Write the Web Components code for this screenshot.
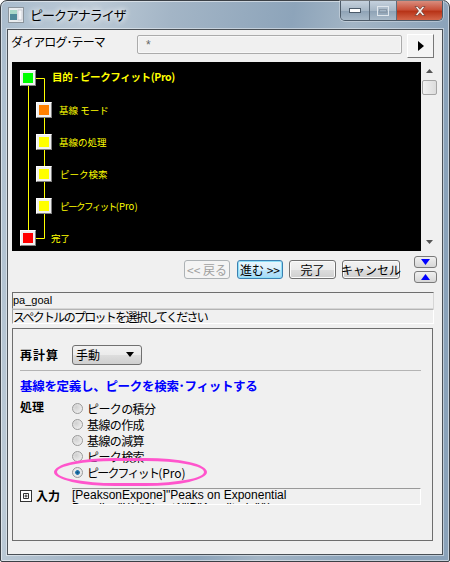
<!DOCTYPE html>
<html lang="ja">
<head>
<meta charset="utf-8">
<title>ピークアナライザ</title>
<style>
html,body{margin:0;padding:0;background:#fff}
body{font:12px "Noto Sans CJK JP","Liberation Sans",sans-serif;color:#000;font-feature-settings:"palt"}
</style>
</head>
<body>
<win-frame caption="ピークアナライザ">
  <theme-row></theme-row>
  <step-view></step-view>
  <wizard-bar></wizard-bar>
  <info-lines></info-lines>
  <goal-panel></goal-panel>
</win-frame>
<script>
class winFrame extends HTMLElement{
    constructor(){
        super()
        this.attachShadow({mode:"open"})
    }
    connectedCallback(){
        this.shadowRoot.innerHTML = `
        <style>
        :host{display:block;width:450px;height:562px;box-sizing:border-box;font:12px "Noto Sans CJK JP","Liberation Sans",sans-serif}
        .frame{box-sizing:border-box;height:562px;display:flex;flex-direction:column;padding:0 6px 6px 6px;border:1px solid #3b4046;border-radius:7px 7px 2px 2px;
            background:linear-gradient(100deg,#a9bccd 0,#bccad6 90px,#a3b5c6 170px,#8da4ba 290px,#a3b5c5 350px,#8aa2b9 450px);box-shadow:inset 0 0 0 1px #ffffff80}
        .title{height:28px;flex:none;display:flex;align-items:center;gap:6px;padding-left:1px;position:relative}
        .title span{font-size:13px;color:#000;text-shadow:0 0 6px #fff,0 0 6px #fff;margin-top:-1px;letter-spacing:-1px}
        .client{flex:1;min-height:0;background:#f0f0f0;border:1px solid #4a5056;box-shadow:0 0 0 1px #ffffff70;display:flex;flex-direction:column;padding:4px 5px 0 4px}
        .btns{position:absolute;right:0;top:0;height:20px;width:103px;display:flex;border:1px solid #4c5a68;border-top:none;border-radius:0 0 5px 5px;overflow:hidden;box-sizing:border-box;box-shadow:0 0 0 1px #ffffff50}
        .b{display:flex;align-items:center;justify-content:center;background:linear-gradient(#c5d1dd,#a7b7c6 50%,#8fa3b6 55%,#a9bac9);border-right:1px solid #5d6c7b;width:28px}
        .b.max{width:26px}
        .b.x{flex:1;border:none;background:linear-gradient(#d98d7e,#c9513a 45%,#b83418 55%,#d4664a)}
        </style>
        <div class="frame">
          <div class="title">
            <svg width="16" height="16" viewBox="0 0 16 16"><rect x=".5" y=".5" width="15" height="15" fill="#e8ecef" stroke="#8b949c"/><rect x="2" y="3" width="7" height="10" fill="#4f8a9a"/><rect x="2" y="3" width="7" height="4" fill="#a8d8c8"/><rect x="10" y="3" width="4" height="10" fill="#f4f6f8" stroke="#aab" stroke-width=".5"/></svg>
            <span>${this.getAttribute("caption")}</span>
            <div class="btns">
              <div class="b"><svg width="12" height="6"><rect x=".5" y=".5" width="11" height="4" fill="#fff" stroke="#4b5a69"/></svg></div>
              <div class="b max"><svg width="12" height="10"><rect x=".5" y=".5" width="11" height="9" fill="none" stroke="#dfe6ec"/><rect x="2.5" y="3.5" width="7" height="3" fill="none" stroke="#8a99a8"/></svg></div>
              <div class="b x"><svg width="14" height="12" viewBox="0 0 14 12"><path d="M2 1.5h2.6L7 4.3 9.400 1.500H12L8.500 6 12 10.500H9.400L7 7.700 4.600 10.500H2L5.500 6z" fill="#f4f1ee" stroke="#6b3a30" stroke-width=".7"/></svg></div>
            </div>
          </div>
          <div class="client"><slot></slot></div>
        </div>
        `
    }
}
customElements.define("win-frame", winFrame)

class themeRow extends HTMLElement{
    constructor(){
        super()
        this.attachShadow({mode:"open"})
    }
    connectedCallback(){
        this.shadowRoot.innerHTML = `
        <style>
        :host{display:flex;height:28px;box-sizing:border-box;align-items:flex-start}
        .lbl{width:126px;margin-left:-1px;font-size:12px;line-height:16px;letter-spacing:-.9px}
        .in{box-sizing:border-box;width:265px;height:19px;margin-top:1px;border:1px solid #ababab;border-radius:2px;box-shadow:inset 0 0 0 1px #f7f7f7;padding:2px 8px;font:12px/15px "Liberation Sans",sans-serif;color:#666}
        .go{box-sizing:border-box;width:27px;height:24px;margin-left:5px;background:#f4f4f4;border:1px solid #fff;border-right-color:#777;border-bottom-color:#777;display:flex;align-items:center;justify-content:center}
        </style>
        <div class="lbl">ダイアログ･テーマ</div>
        <div class="in">*</div>
        <div class="go"><svg width="8" height="12"><path d="M1 1l6 5-6 5z" fill="#000"/></svg></div>
        `
    }
}
customElements.define("theme-row", themeRow)

class stepView extends HTMLElement{
    constructor(){
        super()
        this.attachShadow({mode:"open"})
    }
    node(x,y,color){
        return `<i style="left:${x}px;top:${y}px;background:${color}"></i>`
    }
    label(x,y,text,extra){
        return `<span style="left:${x}px;top:${y}px;${extra || ""}">${text}</span>`
    }
    connectedCallback(){
        this.shadowRoot.innerHTML = `
        <style>
        :host{display:flex;height:189px}
        .tree{position:relative;width:410px;height:189px;background:#000;overflow:hidden}
        .tree svg{position:absolute;left:0;top:0}
        i{position:absolute;box-sizing:border-box;width:16px;height:16px;border:1px solid;border-color:#fff #808080 #808080 #fff;box-shadow:inset 0 0 0 2px #f0f0f0}
        span{position:absolute;color:#ff0;font-size:9.500px;line-height:12px;white-space:nowrap}
        u{text-decoration:none;letter-spacing:0}
        .bar{width:16px;height:189px;background:#f0f0f0;display:flex;flex-direction:column;align-items:center}
        .thumb{box-sizing:border-box;width:15px;height:15px;border:1px solid #a5a5a5;border-radius:2px;background:linear-gradient(90deg,#f2f2f2,#dcdcdc);margin-top:7px;flex:none}
        .up{margin-top:7px;flex:none}
        .dn{margin-top:auto;margin-bottom:7px;flex:none}
        </style>
        <div class="tree">
          <svg width="200" height="189" fill="none" stroke="#ff0" stroke-width="1"><path d="M16.500 20V172M24 16.500H32.500V176.500H24"/></svg>
          ${this.node(8,8,"#00ff00")}
          ${this.node(24,40,"#ff8000")}
          ${this.node(24,72,"#ffff00")}
          ${this.node(24,104,"#ffff00")}
          ${this.node(24,136,"#ffff00")}
          ${this.node(8,168,"#ff0000")}
          ${this.label(40,9,"目的 - ピークフィット(Pro)","font-weight:700;font-size:10.500px;letter-spacing:-.35px")}
          ${this.label(47,42,"基線 モード")}
          ${this.label(47,74,"基線の処理")}
          ${this.label(48,106,"ピーク検索")}
          ${this.label(48,138,"ピークフィット<u>(Pro)</u>","letter-spacing:-1.5px")}
          ${this.label(39,170,"完了")}
        </div>
        <div class="bar">
          <svg class="up" width="7" height="4"><path d="M3.500 0L7 4H0z" fill="#555"/></svg>
          <div class="thumb"></div>
          <svg class="dn" width="7" height="4"><path d="M0 0H7L3.500 4z" fill="#555"/></svg>
        </div>
        `
    }
}
customElements.define("step-view", stepView)

class wizButton extends HTMLElement{
    constructor(){
        super()
        this.attachShadow({mode:"open"})
    }
    connectedCallback(){
        this.shadowRoot.innerHTML = `
        <style>
        :host{display:flex;box-sizing:border-box;height:19px;align-items:center;justify-content:center;white-space:nowrap;font-size:12px;line-height:15px;border:1px solid #707070;border-radius:3px;background:linear-gradient(#f2f2f2,#ebebeb 50%,#dddddd 52%,#cfcfcf);box-shadow:inset 0 0 0 1px #fbfbfb}
        :host([off]){color:#a0a0a0;border-color:#adb2b5;background:#f4f4f4;box-shadow:none}
        :host([on]){border-color:#3c7fb1;background:linear-gradient(#eaf6fd,#d9f0fc 50%,#bee6fd 52%,#a7d9f5);box-shadow:inset 0 0 0 1px #8fe0f8}
        </style>
        <slot></slot>
        `
    }
}
customElements.define("wiz-button", wizButton)

class wizardBar extends HTMLElement{
    constructor(){
        super()
        this.attachShadow({mode:"open"})
    }
    connectedCallback(){
        this.shadowRoot.innerHTML = `
        <style>
        :host{display:flex;height:41px;box-sizing:border-box;padding:9px 0 0 172px}
        .row{display:flex;gap:6px;align-items:flex-start}
        .a{width:46px;margin-right:1px}.b{width:46px}.c{width:47px}.d{width:58px}
        .arrows{display:flex;flex-direction:column;gap:3px;margin:-4px 0 0 8px}
        .s{box-sizing:border-box;width:23px;height:12px;border:1px solid #7a7a7a;border-radius:3px;background:linear-gradient(#f0f0f0,#d6d6d6);display:flex;align-items:center;justify-content:center}
        </style>
        <div class="row">
          <wiz-button class="a" off>&lt;&lt; 戻る</wiz-button>
          <wiz-button class="b" on>進む &gt;&gt;</wiz-button>
          <wiz-button class="c">完了</wiz-button>
          <wiz-button class="d">キャンセル</wiz-button>
          <div class="arrows">
            <div class="s"><svg width="11" height="6"><path d="M1 0H10L5.500 6z" fill="#00f"/></svg></div>
            <div class="s"><svg width="11" height="6"><path d="M5.500 0L10 6H1z" fill="#00f"/></svg></div>
          </div>
        </div>
        `
    }
}
customElements.define("wizard-bar", wizardBar)

class infoLines extends HTMLElement{
    constructor(){
        super()
        this.attachShadow({mode:"open"})
    }
    connectedCallback(){
        this.shadowRoot.innerHTML = `
        <style>
        :host{display:block;width:422px;font-size:12px}
        div{box-sizing:border-box;line-height:14px;white-space:nowrap;overflow:hidden}
        .one{height:17px;border:1px solid #d6d6d6;border-top-color:#6e6e6e;border-left-color:#6e6e6e;font:11px/15px "Liberation Sans",sans-serif}
        .two{height:15px;border:1px solid #fff;border-top-color:#b4b4b4;border-left-color:#a0a0a0;letter-spacing:-1.7px}
        </style>
        <div class="one">pa_goal</div>
        <div class="two">スペクトルのプロットを選択してください</div>
        `
    }
}
customElements.define("info-lines", infoLines)

class radioItem extends HTMLElement{
    constructor(){
        super()
        this.attachShadow({mode:"open"})
    }
    connectedCallback(){
        const on = this.hasAttribute("on")
        this.shadowRoot.innerHTML = `
        <style>
        :host{display:flex;align-items:center;height:16px;gap:4px;font-size:12px;white-space:nowrap;letter-spacing:-.6px}
        :host([on]){letter-spacing:-1.8px}
        .r{box-sizing:border-box;width:11px;height:11px;border-radius:50%;border:1px solid #9a9a9a;background:radial-gradient(circle at 35% 35%,#d0d0d0,#f6f6f6)}
        .r.on{background:radial-gradient(circle,#0c4e7f 0,#2a7fb5 33%,#e8e8e8 40%,#e8e8e8)}
        </style>
        <div class="r ${on ? "on" : ""}"></div><span><slot></slot></span>
        `
    }
}
customElements.define("radio-item", radioItem)

class goalPanel extends HTMLElement{
    constructor(){
        super()
        this.attachShadow({mode:"open"})
    }
    connectedCallback(){
        this.shadowRoot.innerHTML = `
        <style>
        :host{display:block;box-sizing:border-box;width:421px;height:213px;margin-top:4px;border:1px solid #6e6e6e;padding:15px 11px 0 7px;position:relative;font-size:12px}
        b{font-weight:700}
        .calc{display:flex;align-items:center;height:21px;gap:7px}
        .calc b{width:45px;flex:none;letter-spacing:1px}
        .sel{box-sizing:border-box;width:70px;height:20px;border:1px solid #707070;border-radius:3px;background:linear-gradient(#f2f2f2,#ebebeb 50%,#ddd 52%,#cfcfcf);display:flex;align-items:center;justify-content:space-between;padding:0 7px 0 3px}
        hr{border:0;border-top:1px solid #b4b4b4;margin:5px 0 0}
        .head{color:#00f;font-weight:700;font-size:12.500px;line-height:17px;margin-top:6px;letter-spacing:-.3px}
        .proc{display:flex;margin-top:6px;height:80px}
        .proc b{width:52px;flex:none;line-height:16px;margin-top:-1px}
        .list{display:flex;flex-direction:column}
        .input{display:flex;margin-top:8px;align-items:flex-start}
        .tog{box-sizing:border-box;width:12px;height:12px;border:1px solid #333;background:#fff;margin-top:2px;display:flex}
        .input b{width:36px;margin-left:4px;line-height:16px}
        .ta{box-sizing:border-box;width:349px;height:17px;border-top:1px solid #999;border-right:1px solid #fff;border-bottom:1px solid #fff;overflow:hidden;font:12px/13px "Liberation Sans",sans-serif;white-space:normal}
        .ring{position:absolute;left:41px;top:129px;width:153px;height:28px;box-sizing:border-box;border:3px solid #ff55cc;border-radius:40%/50%}
        </style>
        <div class="calc"><b>再計算</b><div class="sel"><span>手動</span><svg width="8" height="5"><path d="M0 0H8L4 5z" fill="#000"/></svg></div></div>
        <hr>
        <div class="head">基線を定義し、ピークを検索･フィットする</div>
        <div class="proc"><b>処理</b>
          <div class="list">
            <radio-item>ピークの積分</radio-item>
            <radio-item>基線の作成</radio-item>
            <radio-item>基線の減算</radio-item>
            <radio-item>ピーク検索</radio-item>
            <radio-item on>ピークフィット<span style="letter-spacing:0">(Pro)</span></radio-item>
          </div>
        </div>
        <div class="input">
          <div class="tog"><svg width="10" height="10"><path d="M2.500 2.500H7.500V7.500H2.500zM5 3.500V6.500M3.500 5H6.500" fill="none" stroke="#333"/></svg></div>
          <b>入力</b>
          <div class="ta">[PeaksonExpone]"Peaks on Exponential<br>Baseline"!(1,"Sheet1"!B"Amplitude"())</div>
        </div>
        <div class="ring"></div>
        `
    }
}
customElements.define("goal-panel", goalPanel)
</script>
</body>
</html>
